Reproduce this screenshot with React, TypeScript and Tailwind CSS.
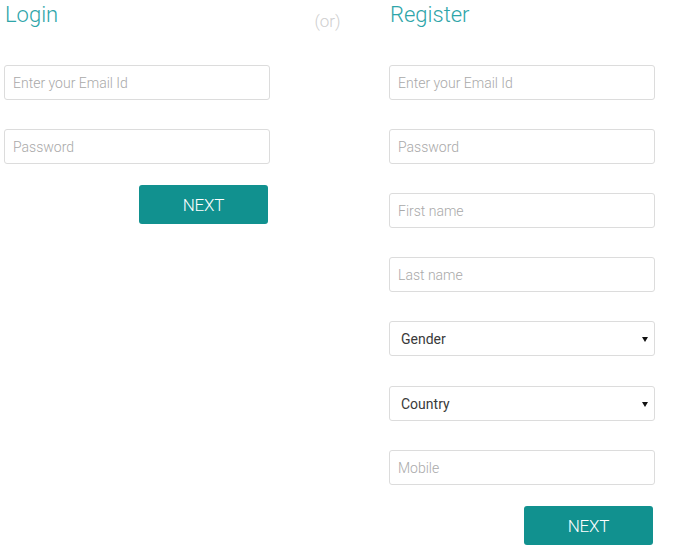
import React from "react";

const inputCls =
  "block w-full h-[35px] border border-[#dcdcdc] rounded-[3px] px-[8px] text-[14px] text-[#555] placeholder:text-[#a9a9a9] font-light outline-none bg-white";

function Field({ placeholder }: { placeholder: string }) {
  return <input className={inputCls} placeholder={placeholder} />;
}

function Select({ label }: { label: string }) {
  return (
    <div className="relative">
      <select className="block w-full h-[35px] appearance-none border border-[#dcdcdc] rounded-[3px] pl-[11px] pr-8 pt-[2px] text-[14px] font-normal text-[#3a3a3a] bg-white outline-none">
        <option>{label}</option>
      </select>
      {/* little black arrow */}
      <svg
        className="absolute right-[7px] top-[16px] pointer-events-none"
        width="6"
        height="5"
        viewBox="0 0 6 5"
      >
        <path d="M0 0h6L3 5z" fill="#111" />
      </svg>
    </div>
  );
}

function NextButton() {
  return (
    <div className="flex justify-end pr-[2px]">
      <button className="w-[129px] h-[39px] pt-[2px] rounded-[3px] bg-[#11918f] text-white text-[17px] font-light tracking-[-0.2px]">
        NEXT
      </button>
    </div>
  );
}

export default function App() {
  return (
    <main
      className="w-[690px] h-[549px] bg-white pl-[4px] flex"
      style={{ fontFamily: "Roboto, 'Noto Sans', sans-serif" }}
    >
      {/* Login */}
      <section className="w-[266px]">
        <h2 className="h-[65px] pl-[1px] text-[22px] leading-[30px] font-light text-[#2ea5a9]">
          Login
        </h2>
        <div className="flex flex-col gap-[29px]">
          <Field placeholder="Enter your Email Id" />
          <Field placeholder="Password" />
        </div>
        <div className="mt-[21px]">
          <NextButton />
        </div>
      </section>

      {/* divider */}
      <div className="w-[119px] flex justify-center pt-[9px] pr-[4px]">
        <span className="text-[17px] font-light text-[#cfcfcf] leading-[24px]">(or)</span>
      </div>

      {/* Register */}
      <section className="w-[266px]">
        <h2 className="h-[65px] pl-[1px] text-[22px] leading-[30px] font-light text-[#2ea5a9]">
          Register
        </h2>
        <div className="flex flex-col gap-[29px]">
          <Field placeholder="Enter your Email Id" />
          <Field placeholder="Password" />
          <Field placeholder="First name" />
          <Field placeholder="Last name" />
          <Select label="Gender" />
          <div className="mt-[1px]">
            <Select label="Country" />
          </div>
          <Field placeholder="Mobile" />
        </div>
        <div className="mt-[21px]">
          <NextButton />
        </div>
      </section>
    </main>
  );
}
